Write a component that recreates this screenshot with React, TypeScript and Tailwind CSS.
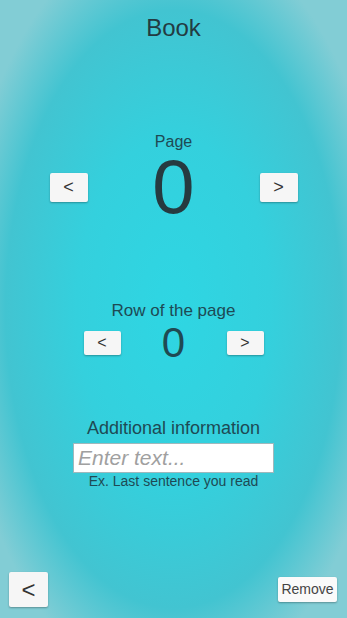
import { useState } from 'react'

const NavButton = ({ label, className }: { label: string; className: string }) => (
    <button
        className={`flex items-center justify-center bg-[#f6f6f6] text-[#333] rounded-[2px] shadow-[0_1px_2px_rgba(0,0,0,0.3)] ${className}`}
    >
        {label}
    </button>
)

const App = () => {
    const [page] = useState(0)
    const [row] = useState(0)

    return (
        <div
            className="flex flex-col items-center h-[618px] w-full overflow-hidden bg-[radial-gradient(ellipse_62%_62%_at_50%_50%,#2ed6e3_0%,#34d0dd_45%,#42c4d1_78%,#82cdd5_100%)] text-[#233b42]"
            style={{ fontFamily: '"Liberation Sans", Arial, sans-serif' }}
        >
            <h1 className="pt-[14px] text-[24px] leading-[28px] font-normal">Book</h1>

            {/* Page counter */}
            <div className="mt-[90px] text-[16px] leading-[20px] text-[#1e4a54]">Page</div>
            <div className="mt-[4px] flex items-center justify-center">
                <NavButton label="<" className="w-[38px] h-[29px] text-[18px]" />
                <div className="w-[172px] text-center text-[76px] leading-[62px] text-[#263a40]">{page}</div>
                <NavButton label=">" className="w-[38px] h-[29px] text-[18px]" />
            </div>

            {/* Row counter */}
            <div className="mt-[83px] text-[17px] leading-[20px] text-[#1e4a54]">Row of the page</div>
            <div className="mt-[8px] flex items-center justify-center h-[28px]">
                <NavButton label="<" className="w-[37px] h-[24px] text-[16px]" />
                <div className="w-[106px] text-center text-[42px] leading-[28px] text-[#1f4a52]">{row}</div>
                <NavButton label=">" className="w-[37px] h-[24px] text-[16px]" />
            </div>

            {/* Additional info */}
            <div className="mt-[60px] text-[18px] leading-[22px] text-[#1e4a54]">Additional information</div>
            <input
                placeholder="Enter text..."
                className="mt-[4px] w-[201px] h-[30px] bg-white border border-[#9fb8bc] pl-[4px] text-[21px] italic text-[#555] placeholder:text-[#a0a0a0] outline-none"
            />
            <div className="text-[14px] leading-[16px] text-[#1e4a54]">Ex. Last sentence you read</div>

            {/* Footer */}
            <div className="mt-auto mb-[11px] w-full flex items-center justify-between pl-[9px] pr-[10px]">
                <NavButton label="<" className="w-[39px] h-[35px] text-[24px]" />
                <NavButton label="Remove" className="w-[59px] h-[25px] text-[14px] text-[#444] bg-[#fafafa]" />
            </div>
        </div>
    )
}

export default App
